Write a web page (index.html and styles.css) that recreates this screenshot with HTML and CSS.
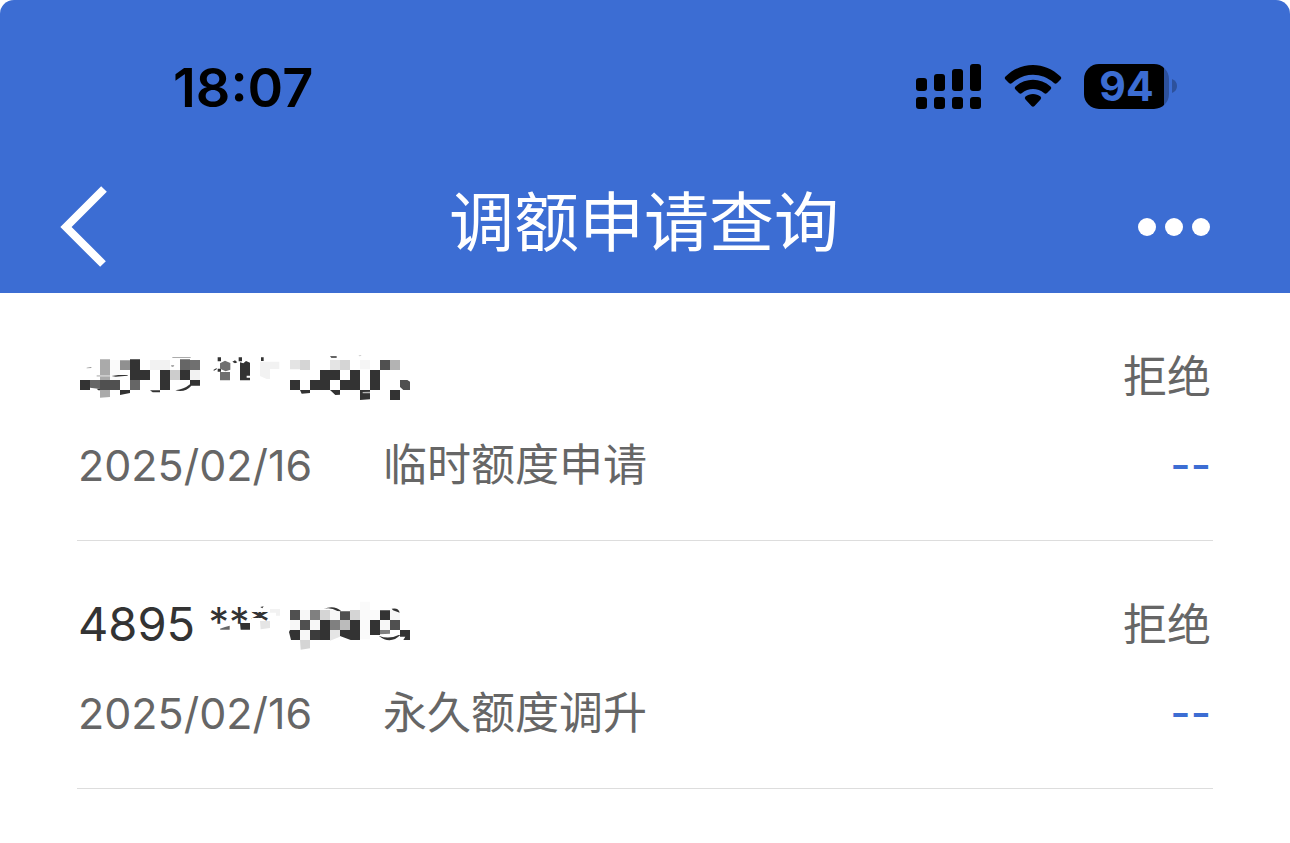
FILE: index.html
```html
<!DOCTYPE html>
<html lang="zh-CN">
<head>
<meta charset="utf-8">
<meta name="viewport" content="width=device-width, initial-scale=1">
<title>调额申请查询</title>
<link rel="stylesheet" href="styles.css">
</head>
<body>
<header class="header">
  <div class="status-bar">
    <time class="clock">18:07</time>
    <div class="indicators">
      <svg class="signal" viewBox="0 0 66 45" aria-hidden="true">
        <rect x="0" y="14" width="11" height="13" rx="3"/><rect x="18" y="10" width="11" height="17" rx="3"/><rect x="36" y="5" width="11" height="22" rx="3"/><rect x="54" y="0" width="11" height="27" rx="3"/>
        <rect x="0" y="33" width="11" height="12" rx="3"/><rect x="18" y="33" width="11" height="12" rx="3"/><rect x="36" y="33" width="11" height="12" rx="3"/><rect x="54" y="33" width="11" height="12" rx="3"/>
      </svg>
      <svg class="wifi" viewBox="0 0 58 45" aria-hidden="true">
        <path d="M1.500 12.500C17-3 41-3 56.500 12.500Q58 14 56.500 15.500L53 19Q51.500 20.500 50 19C38 8 20 8 8 19Q6.500 20.500 5 19L1.500 15.500Q0 14 1.500 12.500Z"/>
        <path d="M11.500 22.500C21.500 13.500 36.500 13.500 46.500 22.500Q48 24 46.500 25.500L43 29Q41.500 30.500 40 29C34 23.500 24 23.500 18 29Q16.500 30.500 15 29L11.500 25.500Q10 24 11.500 22.500Z"/>
        <path d="M21.500 32.500C25.500 29 32.500 29 36.500 32.500Q38 34 36.500 35.500L30.500 42Q29 43.500 27.500 42L21.500 35.500Q20 34 21.500 32.500Z"/>
      </svg>
      <div class="battery">
        <span class="battery-body">94</span>
        <svg class="battery-tip" viewBox="0 0 6 14" aria-hidden="true"><path d="M0 0Q5 2 5 7T0 14Z"/></svg>
      </div>
    </div>
  </div>
  <nav class="nav-bar">
    <button class="nav-button" type="button" aria-label="返回">
      <svg class="back-icon" viewBox="0 0 48 82" aria-hidden="true"><path d="M44 3L6 41L43 78"/></svg>
    </button>
    <h1 class="title">调额申请查询</h1>
    <button class="nav-button nav-button-end" type="button" aria-label="更多">
      <svg class="more-icon" viewBox="0 0 72 18" aria-hidden="true"><circle cx="9" cy="9" r="9"/><circle cx="36" cy="9" r="9"/><circle cx="63" cy="9" r="9"/></svg>
    </button>
  </nav>
</header>
<main>
  <ul class="records">
    <li class="record">
      <div class="line">
        <div class="card">
          <svg class="mosaic" viewBox="24 36 1020 150" role="img" aria-label="卡号已遮盖">
            <path fill="#f2f2f2" d="M240 60h60v30h-60zM360 90h30v30h-30zM570 65h58v22h-28v30h-10l-20-9z"/>
            <path fill="#fafafa" d="M120 60h30v60h-30z"/>
            <g fill="#333"><path d="M180 58h30v32h30v30h-60zM270 90h30v60h-30zM330 90h30v30h-30zM30 120h30v30h-30zM150 150h30v9l-30 6zM240 151h30v6h-22zM360 120h30v17h-26Q346 158 316 151Q342 148 360 133z"/><path d="M443 52h10v12h-10zM506 52h10v12h-10zM443 86h10v9h-10zM430 90l10-6v4l-8 4zM487 65l8-4 7 6-7 3zM510 67l10 3 8-7 12 5v39h-10v6h10v8h-30zM573 52h8v11h-8zM80 146h20v5h-15zM125 108l20-3h29l-2 2-35 3z"/></g>
            <path fill="#aaa" d="M90 58h30v113l-30 2z"/>
            <path fill="#666" d="M330 58h30v32h-30zM60 120h30v27l-30-4zM180 120h30v30h-30z"/>
            <path fill="#505050" d="M90 120h60v30H90z"/>
            <path fill="#909090" d="M150 61h30v29h-30zM307 51h55v2h-55zM50 83l14-2v3l-14 1zM303 76h10l-3 4h-5z"/>
            <path fill="#707070" d="M360 60h30v30h-30zM450 70l15-8 16 7v20l-14 5-17-8zM450 96h30v25h-30z"/>
            <path fill="#ccc" d="M300 90h30v30h-30zM80 105h40v5H80z"/>
            <g fill="#333"><path d="M660 120h30v30h-30zM750 90h60v30h-30v30h-60v-30h30zM840 90h30v60h-60v-30h30zM900 90h30v60h-30zM960 150h30v30h-30zM690 150h30v9l-25 2zM780 150h30v14l-14 1zM870 150h30v28l-30 2zM780 49h20v4h-16z"/></g>
            <path fill="#505050" d="M990 120h22l8 5v25h-20l-10-9zM930 60h30v30h-30z"/>
            <path fill="#b3b3b3" d="M960 60h30v30h-30zM865 47l10-2-5 4zM878 156l22-1v5h-22z"/>
            <path fill="#d5d5d5" d="M690 60h30v30h-30zM810 60h30v30h-30z"/>
            <path fill="#e4e4e4" d="M660 60h30v28h-30zM780 60h30v30h-30z"/>
            <path fill="#f5f5f5" d="M870 60h30v28h-30z"/>
          </svg>
        </div>
        <span class="state">拒绝</span>
      </div>
      <div class="line">
        <time class="date" datetime="2025-02-16">2025/02/16</time>
        <span class="kind">临时额度申请</span>
        <span class="amount">--</span>
      </div>
    </li>
    <li class="record">
      <div class="line">
        <div class="card">
          <span class="card-number">4895 <span class="stars">***</span></span>
          <svg class="mosaic mosaic-over" viewBox="30 30 1020 150" aria-hidden="true">
            <path fill="#fff" d="M546 30h80v36h-80zM546 84h30v40h-30zM576 94h40v30h-40z"/>
            <path fill="#333" d="M510 99h30v20h-28zM571 51l10-2-4 6z"/>
            <path fill="#666" d="M450 116l15-5 14-4v12h-28z"/>
            <path fill="#f2f2f2" d="M600 57h30v20h-12v-9h-18z"/>
            <path fill="#e5e5e5" d="M570 93h30v21l-28 4z"/>
            <path fill="#f7f7f7" d="M690 60h30v30h-30zM660 90h30v30h-30zM690 120h30v30h-30zM720 90h30v30h-30zM780 60h30v30h-30zM930 90h30v30h-30zM960 60h30v30h-30z"/>
            <path fill="#fafafa" d="M870 35h30v113h-30zM900 60h30v30h-30z"/>
            <path fill="#333" d="M657 126l3-6h30v30h-27zM750 90h30v60h-30zM840 90h30v60h-28l-32-12v-18h30zM900 90h30v45h-30zM930 61h30v29h-30zM990 120h30v30h-20l6-10h-16zM760 57q33-14 54 7l-12-1q-20-12-42-6zM965 56q21-4 24 12l-20-7zM926 137q30 12 60-2h5q-30 30-65 2z"/>
            <path fill="#505050" d="M660 60h30v30h-30zM690 90h30v30h-30zM960 90h30v30h-30zM810 64h30v26h-30z"/>
            <path fill="#3c3c3c" d="M720 120h30v30h-30z"/>
            <path fill="#808080" d="M720 60h30v30h-30zM780 90h30v30h-30zM930 120h30v11l-30 2z"/>
            <path fill="#bbb" d="M810 90h30v30h-30z"/>
            <path fill="#d5d5d5" d="M750 60h30v30h-30zM840 60h30v30h-30zM690 150h30v25l-28 4z"/>
            <path fill="#e5e5e5" d="M780 120h30v20l-30 12z"/>
          </svg>
        </div>
        <span class="state">拒绝</span>
      </div>
      <div class="line">
        <time class="date" datetime="2025-02-16">2025/02/16</time>
        <span class="kind">永久额度调升</span>
        <span class="amount">--</span>
      </div>
    </li>
  </ul>
</main>
</body>
</html>
```
FILE: styles.css
```css
* {
  box-sizing: border-box;
}

body {
  margin: 0;
  background: #fff;
  color: #666;
  font-family: Inter, "Noto Sans CJK SC", sans-serif;
}

.header {
  padding: 56px 80px 18px 60px;
  border-radius: 14px 14px 0 0;
  background: #3c6dd3;
}

.status-bar {
  display: flex;
  align-items: center;
  justify-content: space-between;
  height: 62px;
  padding: 0 32px 0 113px;
  color: #000;
}

.clock {
  padding-top: 2px;
  font-size: 54px;
  font-weight: 600;
  line-height: 64px;
}

.indicators {
  display: flex;
  align-items: center;
  gap: 22px;
  padding-bottom: 2px;
}

.signal {
  width: 66px;
  height: 45px;
}

.wifi {
  width: 58px;
  height: 45px;
}

.battery {
  display: flex;
  align-items: center;
  gap: 3px;
}

.battery-body {
  width: 85px;
  height: 45px;
  border-radius: 15px;
  background: linear-gradient(to right, #000 80px, #2d519c 80px);
  color: #3c6dd3;
  font-size: 41px;
  font-weight: 700;
  line-height: 45px;
  text-align: center;
}

.battery-tip {
  width: 6px;
  height: 14px;
  fill: #2d519c;
}

.nav-bar {
  display: grid;
  grid-template-columns: 1fr auto 1fr;
  align-items: center;
  height: 157px;
  padding-top: 61px;
}

.nav-button {
  display: flex;
  padding: 0;
  border: 0;
  background: none;
  cursor: pointer;
}

.nav-button-end {
  justify-self: end;
}

.back-icon {
  width: 48px;
  height: 82px;
  fill: none;
  stroke: #fff;
  stroke-width: 8;
}

.more-icon {
  width: 72px;
  height: 18px;
  fill: #fff;
}

.title {
  margin: 0;
  padding: 0 0 8px 18px;
  color: #fff;
  font-size: 65px;
  font-weight: 400;
  line-height: 80px;
}

.records {
  margin: 0;
  padding: 0 77px;
  list-style: none;
}

.record {
  display: flex;
  flex-direction: column;
  gap: 28px;
  padding: 54px 2px 45px 1px;
  border-bottom: 1px solid #ddd;
}

.line {
  display: flex;
  align-items: center;
  height: 60px;
  font-size: 44px;
  line-height: 60px;
}

.card {
  position: relative;
  display: flex;
  align-items: center;
  height: 60px;
}

.card-number {
  padding-bottom: 2px;
  color: #333;
  font-size: 47px;
}

.stars {
  font-size: 41px;
  line-height: 40px;
  vertical-align: 4px;
}

.mosaic {
  width: 340px;
  height: 50px;
}

.mosaic-over {
  position: absolute;
  top: 5px;
  left: 2px;
}

.state,
.amount {
  margin-left: auto;
}

.date {
  width: 305px;
  font-size: 43px;
}

.amount {
  color: #3c6dd3;
  font-weight: 500;
}
```
